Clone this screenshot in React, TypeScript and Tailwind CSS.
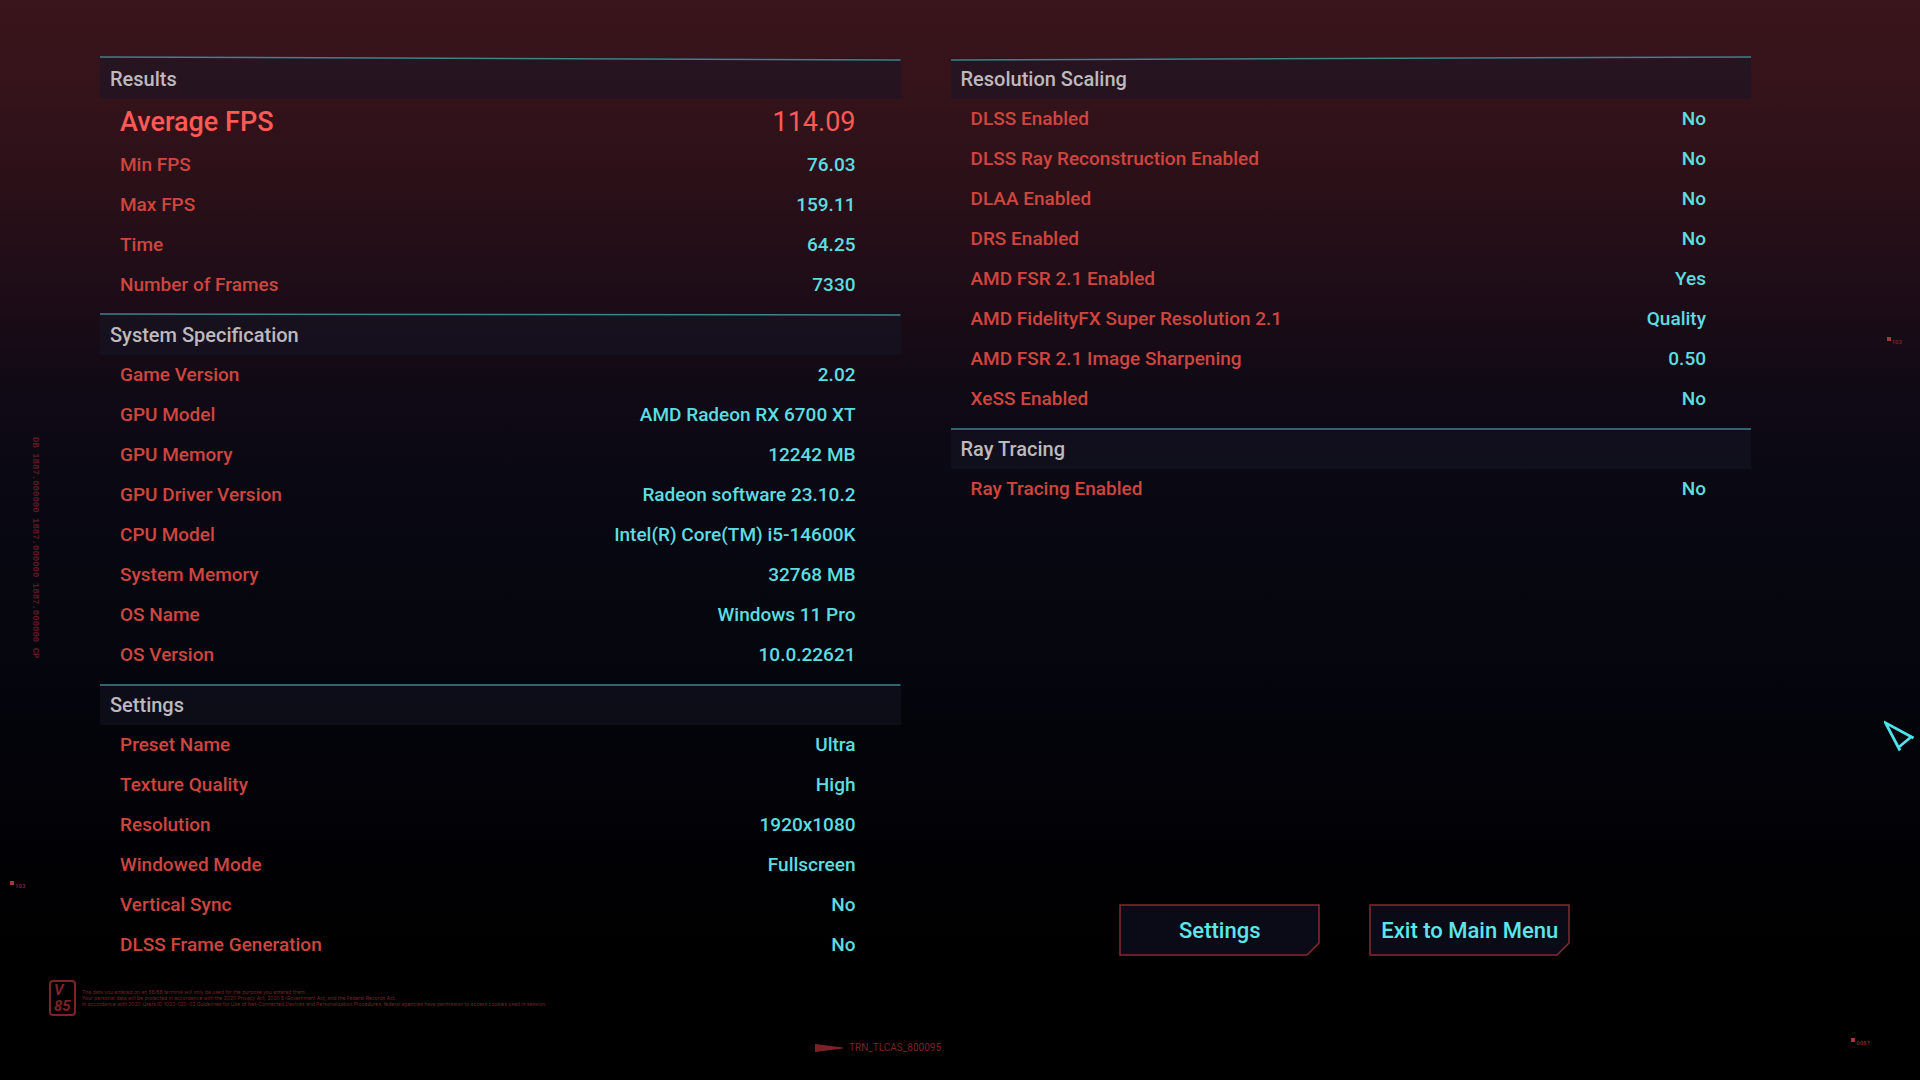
type Row = {
  label: string;
  value: string;
  highlight?: boolean;
};

type Tilt = "down" | "up" | "slight" | "flat";

type Section = {
  title: string;
  tilt: Tilt;
  rows: Row[];
};

const LEFT_SECTIONS: Section[] = [
  {
    title: "Results",
    tilt: "down",
    rows: [
      { label: "Average FPS", value: "114.09", highlight: true },
      { label: "Min FPS", value: "76.03" },
      { label: "Max FPS", value: "159.11" },
      { label: "Time", value: "64.25" },
      { label: "Number of Frames", value: "7330" },
    ],
  },
  {
    title: "System Specification",
    tilt: "slight",
    rows: [
      { label: "Game Version", value: "2.02" },
      { label: "GPU Model", value: "AMD Radeon RX 6700 XT" },
      { label: "GPU Memory", value: "12242 MB" },
      { label: "GPU Driver Version", value: "Radeon software 23.10.2" },
      { label: "CPU Model", value: "Intel(R) Core(TM) i5-14600K" },
      { label: "System Memory", value: "32768 MB" },
      { label: "OS Name", value: "Windows 11 Pro" },
      { label: "OS Version", value: "10.0.22621" },
    ],
  },
  {
    title: "Settings",
    tilt: "flat",
    rows: [
      { label: "Preset Name", value: "Ultra" },
      { label: "Texture Quality", value: "High" },
      { label: "Resolution", value: "1920x1080" },
      { label: "Windowed Mode", value: "Fullscreen" },
      { label: "Vertical Sync", value: "No" },
      { label: "DLSS Frame Generation", value: "No" },
    ],
  },
];

const RIGHT_SECTIONS: Section[] = [
  {
    title: "Resolution Scaling",
    tilt: "up",
    rows: [
      { label: "DLSS Enabled", value: "No" },
      { label: "DLSS Ray Reconstruction Enabled", value: "No" },
      { label: "DLAA Enabled", value: "No" },
      { label: "DRS Enabled", value: "No" },
      { label: "AMD FSR 2.1 Enabled", value: "Yes" },
      { label: "AMD FidelityFX Super Resolution 2.1", value: "Quality" },
      { label: "AMD FSR 2.1 Image Sharpening", value: "0.50" },
      { label: "XeSS Enabled", value: "No" },
    ],
  },
  {
    title: "Ray Tracing",
    tilt: "flat",
    rows: [{ label: "Ray Tracing Enabled", value: "No" }],
  },
];

const TILT_LINE: Record<Tilt, [number, number]> = {
  down: [1, 4],
  up: [4, 1],
  slight: [2, 3],
  flat: [3, 3],
};

function SectionHeader({ title, tilt }: { title: string; tilt: Tilt }) {
  const [y1, y2] = TILT_LINE[tilt];
  return (
    <div className="relative h-[41px] bg-[#161525]/50">
      <svg
        className="absolute -top-0.5 left-0 h-[5px] w-full"
        viewBox="0 0 800 5"
        preserveAspectRatio="none"
        aria-hidden
      >
        <line x1="0" y1={y1} x2="800" y2={y2} stroke="#3f8288" strokeWidth="1.5" />
      </svg>
      <h2 className="px-2.5 text-xl leading-[42px] font-medium text-[#bdb9bd]">
        {title}
      </h2>
    </div>
  );
}

function StatSection({ title, tilt, rows }: Section) {
  return (
    <section className="pb-[9px]">
      <SectionHeader title={title} tilt={tilt} />
      <table className="w-full border-collapse" aria-label={title}>
        <tbody>
          {rows.map((r) => (
            <tr
              key={r.label}
              className={
                r.highlight
                  ? "h-[46px] text-[27px] leading-8 text-[#ff5a55]"
                  : "h-10 text-[19px] leading-6"
              }
            >
              <th
                scope="row"
                className={`py-0 pl-5 text-left font-medium ${r.highlight ? "" : "text-[#cf453f]"}`}
              >
                {r.label}
              </th>
              <td
                className={`py-0 pr-[45px] text-right ${r.highlight ? "" : "font-medium text-[#5cdde0]"}`}
              >
                {r.value}
              </td>
            </tr>
          ))}
        </tbody>
      </table>
    </section>
  );
}

function MenuButton({ label }: { label: string }) {
  return (
    <button
      type="button"
      className="relative h-[52px] w-[201px] text-[22px] font-medium whitespace-nowrap text-[#5ce6ea]"
    >
      <svg
        className="absolute inset-0 h-full w-full"
        viewBox="0 0 201 52"
        aria-hidden
      >
        <path
          d="M1 1H200V39L188 51H1Z"
          fill="#0b0b18"
          stroke="#872a30"
          strokeWidth="1.5"
        />
      </svg>
      <span className="relative">{label}</span>
    </button>
  );
}

function EdgeMark({ text, place }: { text: string; place: string }) {
  return (
    <div
      className={`absolute flex items-start gap-px text-[6px] leading-[10px] font-bold text-[#7a2026] ${place}`}
      aria-hidden
    >
      <span className="h-1 w-1 bg-[#a8343a]" />
      {text}
    </div>
  );
}

function Pointer() {
  return (
    <svg
      className="absolute top-[720px] right-1 h-8 w-8"
      viewBox="0 0 32 32"
      fill="none"
      stroke="#4fe3ea"
      strokeWidth="2.8"
      aria-hidden
    >
      <path d="M29.500 18 1.500 2.800 16 30.500" />
      <path d="M27 17 15 27" />
    </svg>
  );
}

export default function App() {
  return (
    <div className="relative flex min-h-screen flex-col overflow-hidden bg-black bg-[linear-gradient(to_bottom,#3a151b_0%,#35131a_8%,#2b1018_17%,#1c0c17_28%,#100a15_36%,#090812_46%,#05060e_60%,#020207_75%,#000_88%)] font-['Roboto','Liberation_Sans',sans-serif]">
      <main className="flex gap-[50px] pt-[58px] pr-[169px] pl-[100px]">
        <div className="flex-1">
          {LEFT_SECTIONS.map((s) => (
            <StatSection key={s.title} {...s} />
          ))}
        </div>
        <div className="flex flex-1 flex-col">
          {RIGHT_SECTIONS.map((s) => (
            <StatSection key={s.title} {...s} />
          ))}
          <div className="mt-auto flex justify-center gap-[49px] pr-3 pb-[18px]">
            <MenuButton label="Settings" />
            <MenuButton label="Exit to Main Menu" />
          </div>
        </div>
      </main>

      <footer className="text-[#7d2226]">
        <div className="flex items-center gap-1.5 pt-1.5 pl-[49px]">
          <div className="flex h-9 w-[27px] flex-col justify-center rounded border-2 border-current pl-[3px] text-[15px] leading-4 font-bold italic">
            <span>V</span>
            <span>85</span>
          </div>
          <p className="font-['Inter','Liberation_Sans',sans-serif] text-[5px] leading-[6px]">
            The data you entered on an 58/88 terminal will only be used for the purpose you entered them.
            <br />
            Your personal data will be protected in accordance with the 2020 Privacy Act, 2020 E-Government Act, and the Federal Records Act.
            <br />
            In accordance with 2020 Users ID 1020-020-02 Guidelines for Use of Net-Connected Devices and Personalization Procedures, federal agencies have permission to access cookies used in session.
          </p>
        </div>
        <div className="flex items-center gap-1.5 pt-6 pl-[815px]">
          <svg className="h-2 w-7" viewBox="0 0 28 8" fill="currentColor" aria-hidden>
            <path d="M0 0 28 3.500V4.500L0 8Z" />
          </svg>
          <span className="text-[10px] leading-4">TRN_TLCAS_800095</span>
        </div>
      </footer>

      <div
        className="absolute top-[437px] left-[30px] font-['Liberation_Mono',monospace] text-[9px] leading-[10px] font-bold whitespace-nowrap text-[#5e1a22] [writing-mode:vertical-rl]"
        aria-hidden
      >
        DB 1887.000000 1887.000000 1887.000000 CP
      </div>
      <EdgeMark text="103" place="top-[881px] left-2.5" />
      <EdgeMark text="103" place="top-[337px] right-[18px]" />
      <EdgeMark text="0087" place="top-[1038px] right-[50px]" />
      <Pointer />
    </div>
  );
}
